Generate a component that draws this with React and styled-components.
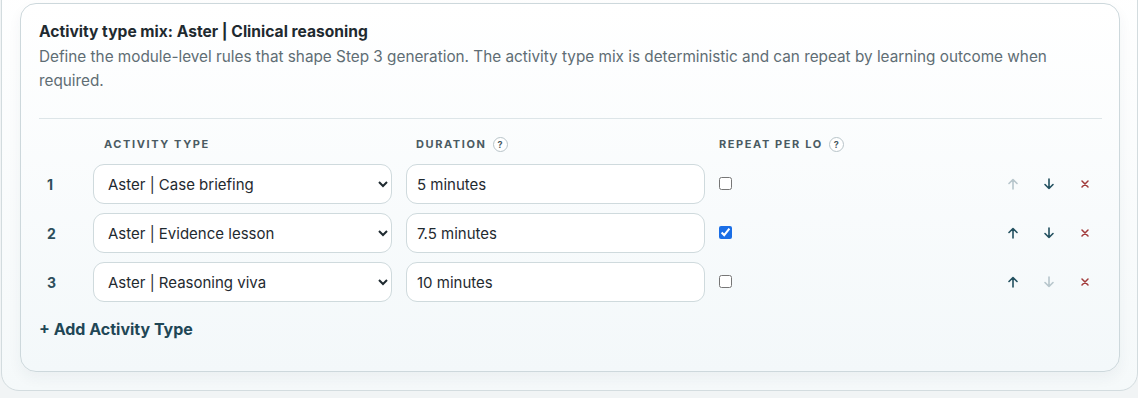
import React from 'react'
import styled, { createGlobalStyle } from 'styled-components'

const GlobalStyle = createGlobalStyle`
  body {
    margin: 0;
    background: #f1f4f5;
    font-family: Inter, "Open Sans", sans-serif;
    color: #1f2a30;
  }
`

const Panel = styled.div`
  margin: -21px 0 8px 1px;
  padding: 23px 17px 18px 18px;
  border: 1px solid #d3dcdf;
  border-radius: 18px;
  background: linear-gradient(180deg, #ffffff 0%, #f5f9fa 100%);
`

const Card = styled.section`
  border: 1px solid #cdd8dc;
  border-radius: 16px;
  background: linear-gradient(180deg, #ffffff 0%, #f3f8fa 100%);
  box-shadow: 0 6px 14px rgba(30, 60, 70, 0.05);
  padding: 18px 17px 32px 18px;
`

const Title = styled.h3`
  margin: 0;
  font-size: 15.6px;
  line-height: 20px;
  font-weight: 700;
  color: #1f2a30;
`

const Description = styled.p`
  margin: 3px 0 0;
  font-size: 15.3px;
  line-height: 24px;
  color: #5f6d74;
  max-width: 1055px;
`

const Divider = styled.hr`
  margin: 25px 0 0;
  border: 0;
  border-top: 1px solid #dde5e8;
`

const Grid = styled.div`
  display: grid;
  grid-template-columns: 40px 299px 299px 1fr auto;
  column-gap: 14px;
  row-gap: 9px;
  align-items: center;
  margin-top: 16px;
`

const HeaderCell = styled.div`
  display: flex;
  align-items: center;
  gap: 6px;
  padding-left: ${p => p.$indent || 0}px;
  margin-bottom: 2px;
  font-size: 11px;
  font-weight: 700;
  letter-spacing: 1.6px;
  text-transform: uppercase;
  color: #4a5a62;
  height: 18px;
`

const Help = styled.span`
  display: inline-flex;
  align-items: center;
  justify-content: center;
  width: 13px;
  height: 13px;
  border: 1px solid #b8c4c9;
  border-radius: 50%;
  font-size: 9px;
  letter-spacing: 0;
  font-weight: 700;
  color: #4a5a62;
  background: #fff;
`

const Index = styled.div`
  padding-left: 8px;
  font-size: 14px;
  font-weight: 700;
  color: #2d4f5c;
`

const Select = styled.select`
  width: 100%;
  height: 40px;
  border: 1px solid #cfdadd;
  border-radius: 11px;
  background: #fff;
  padding: 0 10px 0 10px;
  font-family: inherit;
  font-size: 15px;
  color: #1f2a30;
  outline: none;
`

const Input = styled.input`
  box-sizing: border-box;
  width: 100%;
  height: 40px;
  border: 1px solid #cfdadd;
  border-radius: 11px;
  background: #fff;
  padding: 0 10px;
  font-family: inherit;
  font-size: 15px;
  color: #1f2a30;
  outline: none;
`

const Check = styled.input`
  margin: 0;
  width: 13px;
  height: 13px;
  accent-color: #1a6ee6;
`

const Actions = styled.div`
  display: flex;
  gap: 8px;
  padding-right: 3px;
`

const IconButton = styled.button`
  width: 28px;
  height: 28px;
  display: flex;
  align-items: center;
  justify-content: center;
  padding: 0;
  border: 0;
  background: transparent;
  color: ${p => (p.$danger ? '#a23b3b' : p.disabled ? '#b7c6cc' : '#22505f')};
  cursor: pointer;
`

const AddButton = styled.button`
  margin-top: 17px;
  padding: 0;
  border: 0;
  background: transparent;
  font-family: inherit;
  font-size: 16px;
  font-weight: 700;
  color: #1f4756;
  cursor: pointer;
`

const ArrowUp = () => (
  <svg width="12" height="12" viewBox="0 0 12 12" fill="none" stroke="currentColor" strokeWidth="1.6" strokeLinecap="round" strokeLinejoin="round">
    <path d="M6 11V1.5M2 5.5L6 1.5L10 5.5" />
  </svg>
)

const ArrowDown = () => (
  <svg width="12" height="12" viewBox="0 0 12 12" fill="none" stroke="currentColor" strokeWidth="1.6" strokeLinecap="round" strokeLinejoin="round">
    <path d="M6 1V10.5M2 6.5L6 10.5L10 6.5" />
  </svg>
)

const Cross = () => (
  <svg width="8" height="8" viewBox="0 0 8 8" fill="none" stroke="currentColor" strokeWidth="1.5" strokeLinecap="round">
    <path d="M1 1L7 7M7 1L1 7" />
  </svg>
)

const activityTypes = [
  'Aster | Case briefing',
  'Aster | Evidence lesson',
  'Aster | Reasoning viva',
]

const rows = [
  { type: 'Aster | Case briefing', duration: '5 minutes', repeat: false },
  { type: 'Aster | Evidence lesson', duration: '7.5 minutes', repeat: true },
  { type: 'Aster | Reasoning viva', duration: '10 minutes', repeat: false },
]

export default function App() {
  return (
    <>
      <GlobalStyle />
      <Panel>
        <Card>
          <Title>Activity type mix: Aster | Clinical reasoning</Title>
          <Description>
            Define the module-level rules that shape Step 3 generation. The activity type mix is deterministic and can repeat by learning outcome when required.
          </Description>
          <Divider />
          <Grid>
            <div />
            <HeaderCell $indent={11}>Activity type</HeaderCell>
            <HeaderCell $indent={10}>Duration <Help>?</Help></HeaderCell>
            <HeaderCell>Repeat per LO <Help>?</Help></HeaderCell>
            <div />
            {rows.map((r, i) => (
              <React.Fragment key={i}>
                <Index>{i + 1}</Index>
                <Select defaultValue={r.type}>
                  {activityTypes.map(t => <option key={t}>{t}</option>)}
                </Select>
                <Input defaultValue={r.duration} />
                <div><Check type="checkbox" defaultChecked={r.repeat} /></div>
                <Actions>
                  <IconButton disabled={i === 0}><ArrowUp /></IconButton>
                  <IconButton disabled={i === rows.length - 1}><ArrowDown /></IconButton>
                  <IconButton $danger><Cross /></IconButton>
                </Actions>
              </React.Fragment>
            ))}
          </Grid>
          <AddButton>+ Add Activity Type</AddButton>
        </Card>
      </Panel>
    </>
  )
}
